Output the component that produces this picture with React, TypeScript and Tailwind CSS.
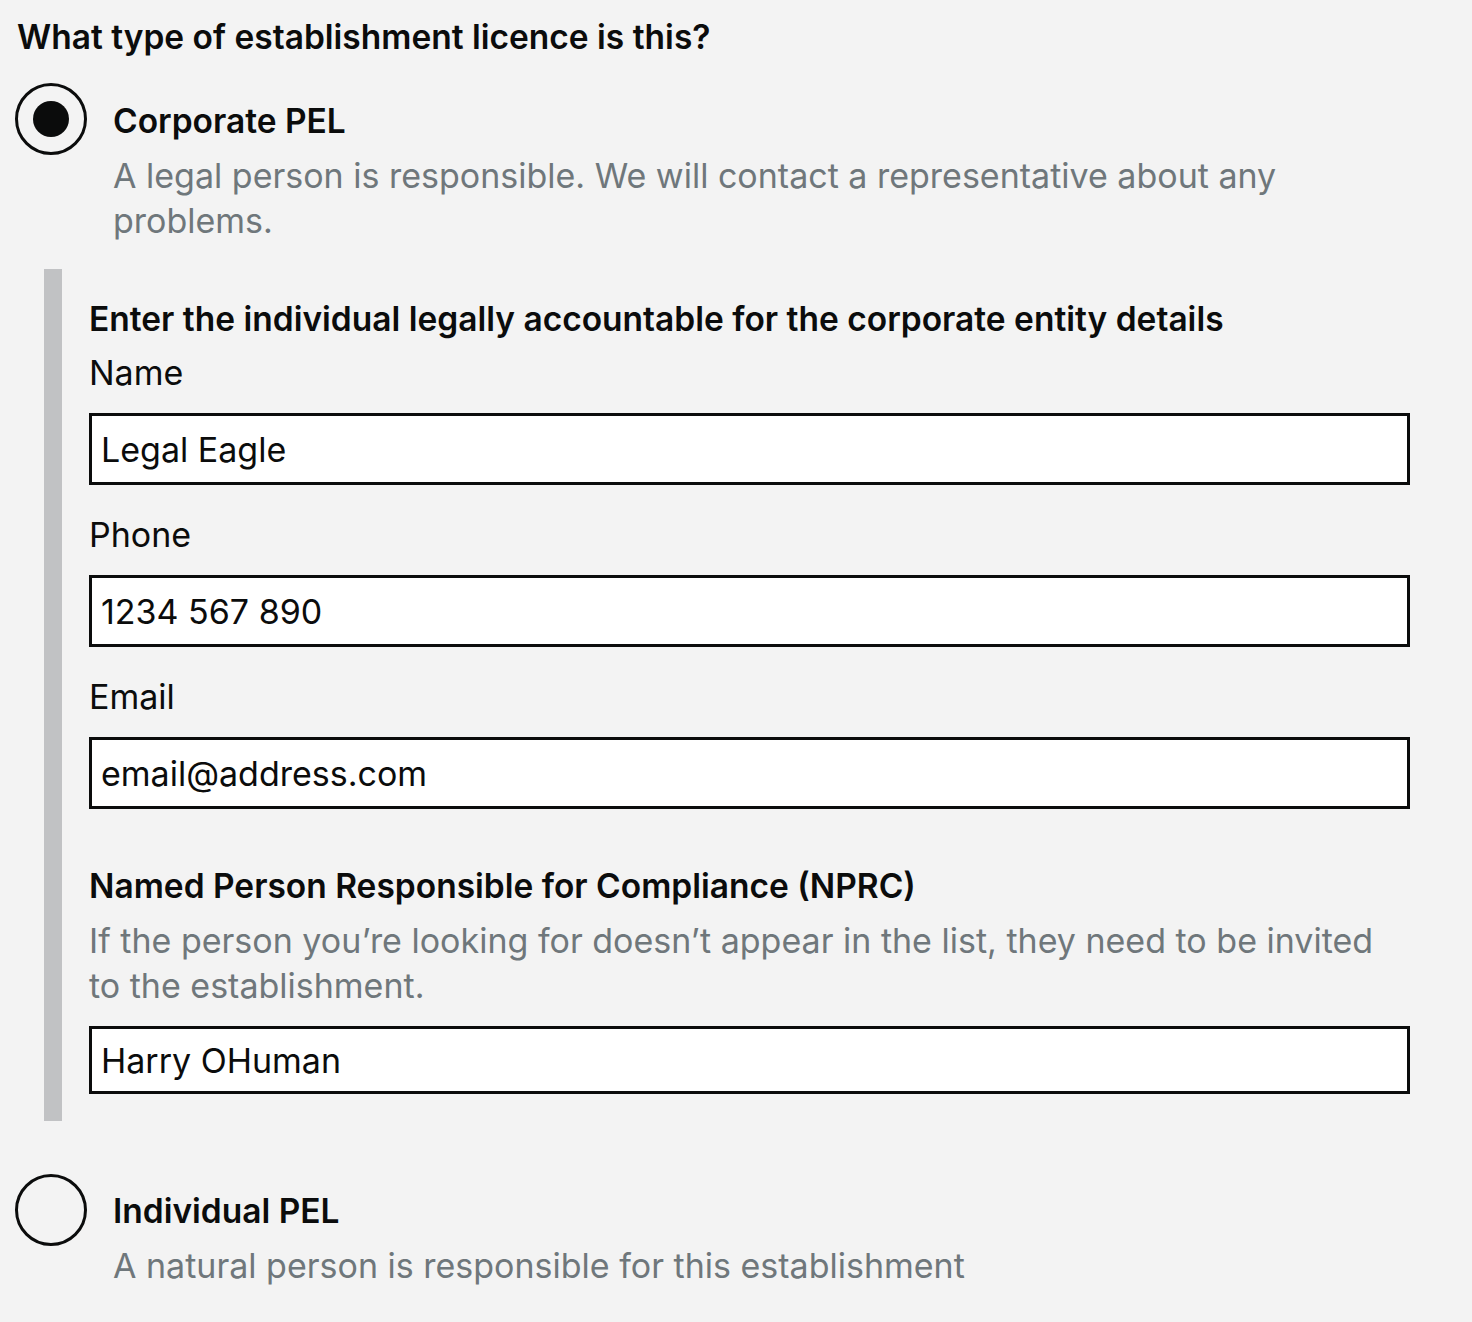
import React from "react";

const font = { fontFamily: "Inter, 'Noto Sans', sans-serif" };

type FieldProps = {
  label: string;
  value: string;
  tall?: boolean;
};

function Field({ label, value, tall = true }: FieldProps) {
  return (
    <div className="flex flex-col">
      <label className="text-[34px] leading-[44px] text-[#0b0c0c]">{label}</label>
      <div
        className={`mt-[18px] flex items-center border-[3px] border-[#0b0c0c] bg-white pl-[9px] text-[34px] text-[#0b0c0c] ${
          tall ? "h-[72px]" : "h-[68px]"
        }`}
      >
        {value}
      </div>
    </div>
  );
}

function Radio({ checked }: { checked: boolean }) {
  return (
    <span className="flex h-[72px] w-[72px] shrink-0 items-center justify-center rounded-full border-[3px] border-[#0b0c0c]">
      {checked && <span className="h-[36px] w-[36px] rounded-full bg-[#0b0c0c]" />}
    </span>
  );
}

export default function App() {
  return (
    <div className="min-h-[1322px] w-[1472px] bg-[#f3f3f3] text-[#0b0c0c]" style={font}>
      <div className="pl-[17px] pt-[15px]">
        <h1 className="text-[33.5px] font-semibold leading-[44px]">What type of establishment licence is this?</h1>
      </div>

      <div className="mt-[24px] flex gap-[26px] pl-[15px]">
        <Radio checked />
        <div className="pt-[16px]">
          <div className="text-[33.5px] font-semibold leading-[44px]">Corporate PEL</div>
          <p className="mt-[10px] w-[1200px] text-[34px] leading-[45px] text-[#6f777b]">
            A legal person is responsible. We will contact a representative about any problems.
          </p>
        </div>
      </div>

      <div className="ml-[44px] mt-[26px] w-[1366px] border-l-[18px] border-[#c1c2c4] pb-[27px] pl-[27px] pt-[28px]">
        <div className="w-[1321px]">
          <h2 className="text-[33.5px] font-semibold leading-[44px]">
            Enter the individual legally accountable for the corporate entity details
          </h2>
          <div className="mt-[10px] flex flex-col gap-[28px]">
            <Field label="Name" value="Legal Eagle" />
            <Field label="Phone" value="1234 567 890" />
            <Field label="Email" value="email@address.com" />
          </div>

          <div className="mt-[55px]">
            <h3 className="text-[33.5px] font-semibold leading-[44px]">
              Named Person Responsible for Compliance (NPRC)
            </h3>
            <p className="mt-[10px] text-[34px] leading-[45px] text-[#6f777b]">
              If the person you’re looking for doesn’t appear in the list, they need to be invited to the establishment.
            </p>
            <div className="mt-[18px] flex h-[68px] items-center border-[3px] border-[#0b0c0c] bg-white pl-[9px] text-[34px]">
              Harry OHuman
            </div>
          </div>
        </div>
      </div>

      <div className="mt-[53px] flex gap-[26px] pl-[15px]">
        <Radio checked={false} />
        <div className="pt-[15px]">
          <div className="text-[33.5px] font-semibold leading-[44px]">Individual PEL</div>
          <p className="mt-[10px] text-[34px] leading-[45px] text-[#6f777b]">
            A natural person is responsible for this establishment
          </p>
        </div>
      </div>
    </div>
  );
}
